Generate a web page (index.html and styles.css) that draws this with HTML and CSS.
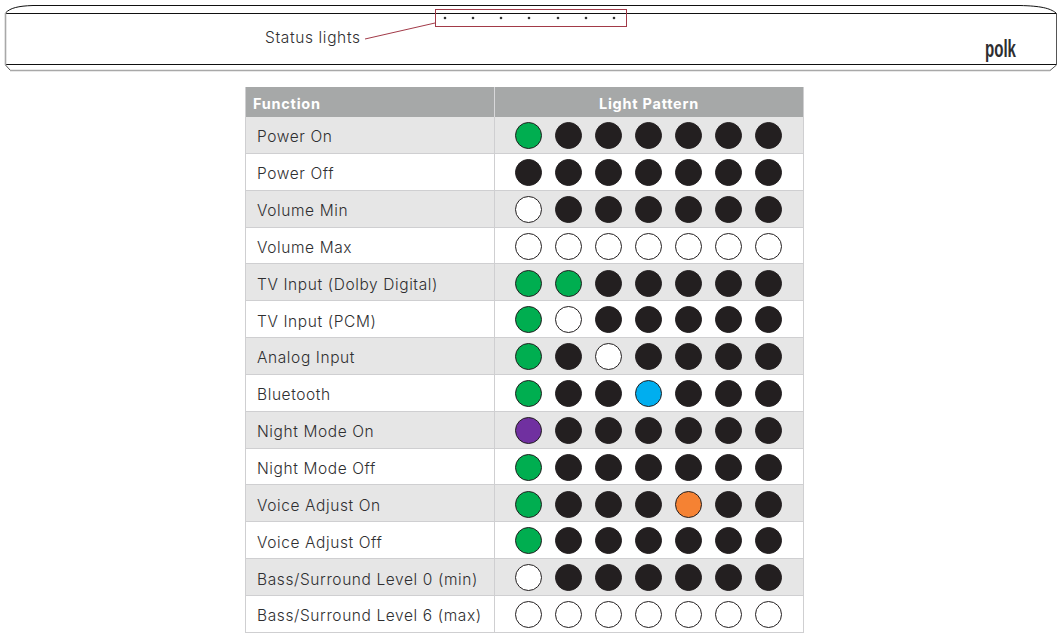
FILE: index.html
```html
<!DOCTYPE html>
<html lang="en">
<head>
<meta charset="utf-8">
<title>Status lights</title>
<link rel="stylesheet" href="styles.css">
</head>
<body>
<svg class="bar" width="1060" height="72" viewBox="0 0 1060 72">
  <path class="edge" d="M5.5 13C10 8 18 6 33 5.5H1020C1040 6 1050 8 1056 13"/>
  <path class="edge" d="M5 13.5H1056M5 64.5H1056"/>
  <path class="soft" d="M5.5 13V65"/>
  <path class="thin" d="M1056.5 13V65L1050 70.5M5.5 65L10 70"/>
  <path class="soft" d="M10 70.5H1050"/>
  <rect class="callout" x="435.5" y="9.5" width="191" height="17"/>
  <path class="callout" d="M435 23L365 39"/>
  <g class="leds">
    <circle cx="445" cy="18" r="1.3"/><circle cx="473" cy="18" r="1.3"/><circle cx="501" cy="18" r="1.3"/><circle cx="529" cy="18" r="1.3"/><circle cx="558" cy="18" r="1.3"/><circle cx="586" cy="18" r="1.3"/><circle cx="614" cy="18" r="1.3"/>
  </g>
  <text class="label" x="265" y="43" textLength="95">Status lights</text>
  <text class="logo" x="985" y="57" textLength="31" lengthAdjust="spacingAndGlyphs">polk</text>
</svg>
<div class="table">
  <div class="head">Function</div><div class="head center">Light Pattern</div>

  <div class="name">Power On</div><div class="lights"><i class="g"></i><i></i><i></i><i></i><i></i><i></i><i></i></div>
  <div class="name">Power Off</div><div class="lights"><i></i><i></i><i></i><i></i><i></i><i></i><i></i></div>
  <div class="name">Volume Min</div><div class="lights"><i class="w"></i><i></i><i></i><i></i><i></i><i></i><i></i></div>
  <div class="name">Volume Max</div><div class="lights"><i class="w"></i><i class="w"></i><i class="w"></i><i class="w"></i><i class="w"></i><i class="w"></i><i class="w"></i></div>
  <div class="name">TV Input (Dolby Digital)</div><div class="lights"><i class="g"></i><i class="g"></i><i></i><i></i><i></i><i></i><i></i></div>
  <div class="name">TV Input (PCM)</div><div class="lights"><i class="g"></i><i class="w"></i><i></i><i></i><i></i><i></i><i></i></div>
  <div class="name">Analog Input</div><div class="lights"><i class="g"></i><i></i><i class="w"></i><i></i><i></i><i></i><i></i></div>
  <div class="name">Bluetooth</div><div class="lights"><i class="g"></i><i></i><i></i><i class="b"></i><i></i><i></i><i></i></div>
  <div class="name">Night Mode On</div><div class="lights"><i class="p"></i><i></i><i></i><i></i><i></i><i></i><i></i></div>
  <div class="name">Night Mode Off</div><div class="lights"><i class="g"></i><i></i><i></i><i></i><i></i><i></i><i></i></div>
  <div class="name">Voice Adjust On</div><div class="lights"><i class="g"></i><i></i><i></i><i></i><i class="o"></i><i></i><i></i></div>
  <div class="name">Voice Adjust Off</div><div class="lights"><i class="g"></i><i></i><i></i><i></i><i></i><i></i><i></i></div>
  <div class="name">Bass/Surround Level 0 (min)</div><div class="lights"><i class="w"></i><i></i><i></i><i></i><i></i><i></i><i></i></div>
  <div class="name">Bass/Surround Level 6 (max)</div><div class="lights"><i class="w"></i><i class="w"></i><i class="w"></i><i class="w"></i><i class="w"></i><i class="w"></i><i class="w"></i></div>
</div>
</body>
</html>
```
FILE: styles.css
```css
html, body { margin: 0; padding: 0; background: #fff; }
body { width: 1060px; height: 639px; overflow: hidden; font-family: "Inter", "Liberation Sans", sans-serif; color: #2f2f31; }

.bar { display: block; }
.edge { fill: none; stroke: #111; stroke-width: 1; }
.soft { fill: none; stroke: #a8a8a8; stroke-width: 1.6; }
.thin { fill: none; stroke: #555; stroke-width: 1; }
.callout { fill: none; stroke: #a23a48; stroke-width: 1; }
.leds { fill: #333; }
.label { font-family: "Inter", "Liberation Sans", sans-serif; font-size: 15.5px; font-weight: 300; fill: #2f2f31; }
.logo { font-family: "Liberation Sans Narrow", "Liberation Sans", sans-serif; font-weight: 700; font-size: 24px; fill: #2e2e30; }

.table {
  display: grid;
  grid-template-columns: 249px 308px;
  grid-template-rows: 30px repeat(14, 36.85px);
  width: 557px;
  margin: 15px 0 0 245px;
  border-left: 1px solid #cfcfd1;
  border-right: 1px solid #cfcfd1;
  box-sizing: content-box;
}
.head {
  background: #a6a8a8;
  color: #fff;
  font-weight: 700;
  font-size: 14.5px;
  letter-spacing: 0.75px;
  display: flex;
  align-items: center;
  padding: 2px 0 0 7px;
  border-right: 1px solid #d8d8da;
}
.center { justify-content: center; padding-left: 0; border-right: 0; }
.name {
  display: flex;
  align-items: center;
  padding: 4px 0 0 11px;
  font-size: 15.5px;
  font-weight: 300;
  letter-spacing: 0.6px;
  white-space: nowrap;
  border-right: 1px solid #cfcfd1;
  border-bottom: 1px solid #cfcfd1;
}
.lights {
  display: flex;
  align-items: center;
  gap: 13px;
  padding: 1.5px 0 0 20px;
  border-bottom: 1px solid #cfcfd1;
}
.name:nth-child(4n+3), .name:nth-child(4n+3) + .lights { background: #e6e6e6; }
.lights i {
  display: block;
  box-sizing: border-box;
  width: 27px;
  height: 27px;
  border-radius: 50%;
  background: #231f20;
  border: 1px solid #231f20;
}
.lights .g { background: #00ae50; }
.lights .w { background: #fff; }
.lights .b { background: #00aeef; }
.lights .p { background: #7030a0; }
.lights .o { background: #f58233; }
```
